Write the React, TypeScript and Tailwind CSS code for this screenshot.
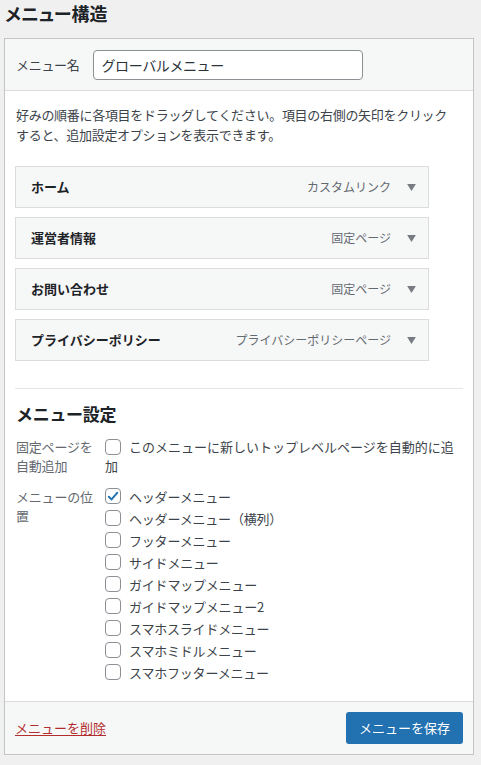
import React from "react";

const ITEMS = [
  { title: "ホーム", type: "カスタムリンク" },
  { title: "運営者情報", type: "固定ページ" },
  { title: "お問い合わせ", type: "固定ページ" },
  { title: "プライバシーポリシー", type: "プライバシーポリシーページ" },
];

const LOCATIONS = [
  { label: "ヘッダーメニュー", checked: true },
  { label: "ヘッダーメニュー（横列）", checked: false },
  { label: "フッターメニュー", checked: false },
  { label: "サイドメニュー", checked: false },
  { label: "ガイドマップメニュー", checked: false },
  { label: "ガイドマップメニュー2", checked: false },
  { label: "スマホスライドメニュー", checked: false },
  { label: "スマホミドルメニュー", checked: false },
  { label: "スマホフッターメニュー", checked: false },
];

function Checkbox({ checked }: { checked?: boolean }) {
  return (
    <span className="inline-flex w-4 h-4 shrink-0 items-center justify-center rounded-[4px] border border-[#8c8f94] bg-white align-[-3px]">
      {checked && (
        <svg viewBox="0 0 16 16" className="w-[15px] h-[15px]">
          <path d="M3.2 8.3 L6.4 11.4 L12.8 3.8" fill="none" stroke="#2271b1" strokeWidth="2.2" strokeLinecap="round" strokeLinejoin="round" />
        </svg>
      )}
    </span>
  );
}

function MenuItem({ title, type }: { title: string; type: string }) {
  return (
    <div className="w-[414px] h-[42px] flex items-center border border-[#dcdcde] bg-[#f6f7f7] pl-[15px] pr-[12px]">
      <span className="flex-1 text-[13px] font-bold text-[#1d2327]">{title}</span>
      <span className="text-[12px] text-[#646970]">{type}</span>
      <svg viewBox="0 0 10 8" className="w-[9px] h-[7px] ml-[16px]">
        <path d="M0 0 L10 0 L5 8 Z" fill="#787c82" />
      </svg>
    </div>
  );
}

export default function App() {
  return (
    <div
      className="w-[481px] h-[765px] bg-[#f0f0f1] pl-[4px] pt-[1px] text-[#1d2327]"
      style={{ fontFamily: '"Noto Sans CJK JP", "Noto Sans", sans-serif' }}
    >
      <h2 className="pl-[1px] text-[18px] leading-[24px] font-bold mb-[13px] [font-feature-settings:'palt']">
        メニュー構造
      </h2>

      <div className="w-[470px] border border-[#c3c4c7] bg-white">
        {/* header */}
        <div className="flex items-center bg-[#f6f7f7] border-b border-[#dcdcde] pl-[11px] pt-[11px] pb-[10px]">
          <span className="text-[13px] text-[#3c434a] mr-[13px] tracking-[-0.3px]">メニュー名</span>
          <div className="w-[270px] h-[30px] flex items-center rounded-[4px] border border-[#8c8f94] bg-white px-[8px] text-[14px] tracking-[-0.4px] text-[#2c3338]">
            グローバルメニュー
          </div>
        </div>

        {/* body */}
        <div className="px-[10px] pt-[14px] pb-[18px]">
          <p className="pl-[1px] text-[13px] leading-[19.5px] text-[#3c434a] tracking-[-0.3px]">
            好みの順番に各項目をドラッグしてください。項目の右側の矢印をクリック
            <br />
            すると、追加設定オプションを表示できます。
          </p>

          <div className="mt-[22px] flex flex-col gap-[9px]">
            {ITEMS.map((it) => (
              <MenuItem key={it.title} title={it.title} type={it.type} />
            ))}
          </div>

          <div className="mt-[27px] border-t border-[#e5e5e5]" />

          <h3 className="pl-[1px] mt-[13px] text-[17px] leading-[24px] font-bold tracking-[-0.3px]">メニュー設定</h3>

          <div className="mt-[11px] flex text-[13px] leading-[19px]">
            <div className="w-[82px] mr-[8px] pl-[1px] text-[#646970] tracking-[-0.2px]">固定ページを自動追加</div>
            <div className="flex-1 text-[#3c434a]">
              <Checkbox />
              <span className="ml-[8px]">このメニューに新しいトップレベルページを自動的に追加</span>
            </div>
          </div>

          <div className="mt-[10px] flex text-[13px] leading-[19px]">
            <div className="w-[82px] mr-[8px] pl-[1px] pt-[1.5px] text-[#646970] tracking-[-0.2px]">メニューの位置</div>
            <div className="flex-1 flex flex-col text-[#3c434a]">
              {LOCATIONS.map((l) => (
                <div key={l.label} className="h-[22px] flex items-center">
                  <Checkbox checked={l.checked} />
                  <span className="ml-[8px] tracking-[-0.2px]">{l.label}</span>
                </div>
              ))}
            </div>
          </div>
        </div>

        {/* footer */}
        <div className="flex items-center justify-between bg-[#f6f7f7] border-t border-[#dcdcde] px-[10px] py-[10px]">
          <a className="text-[13px] text-[#b32d2e] underline underline-offset-2">メニューを削除</a>
          <button className="w-[117px] h-[32px] rounded-[3px] bg-[#2271b1] text-[13px] text-white">メニューを保存</button>
        </div>
      </div>
    </div>
  );
}
